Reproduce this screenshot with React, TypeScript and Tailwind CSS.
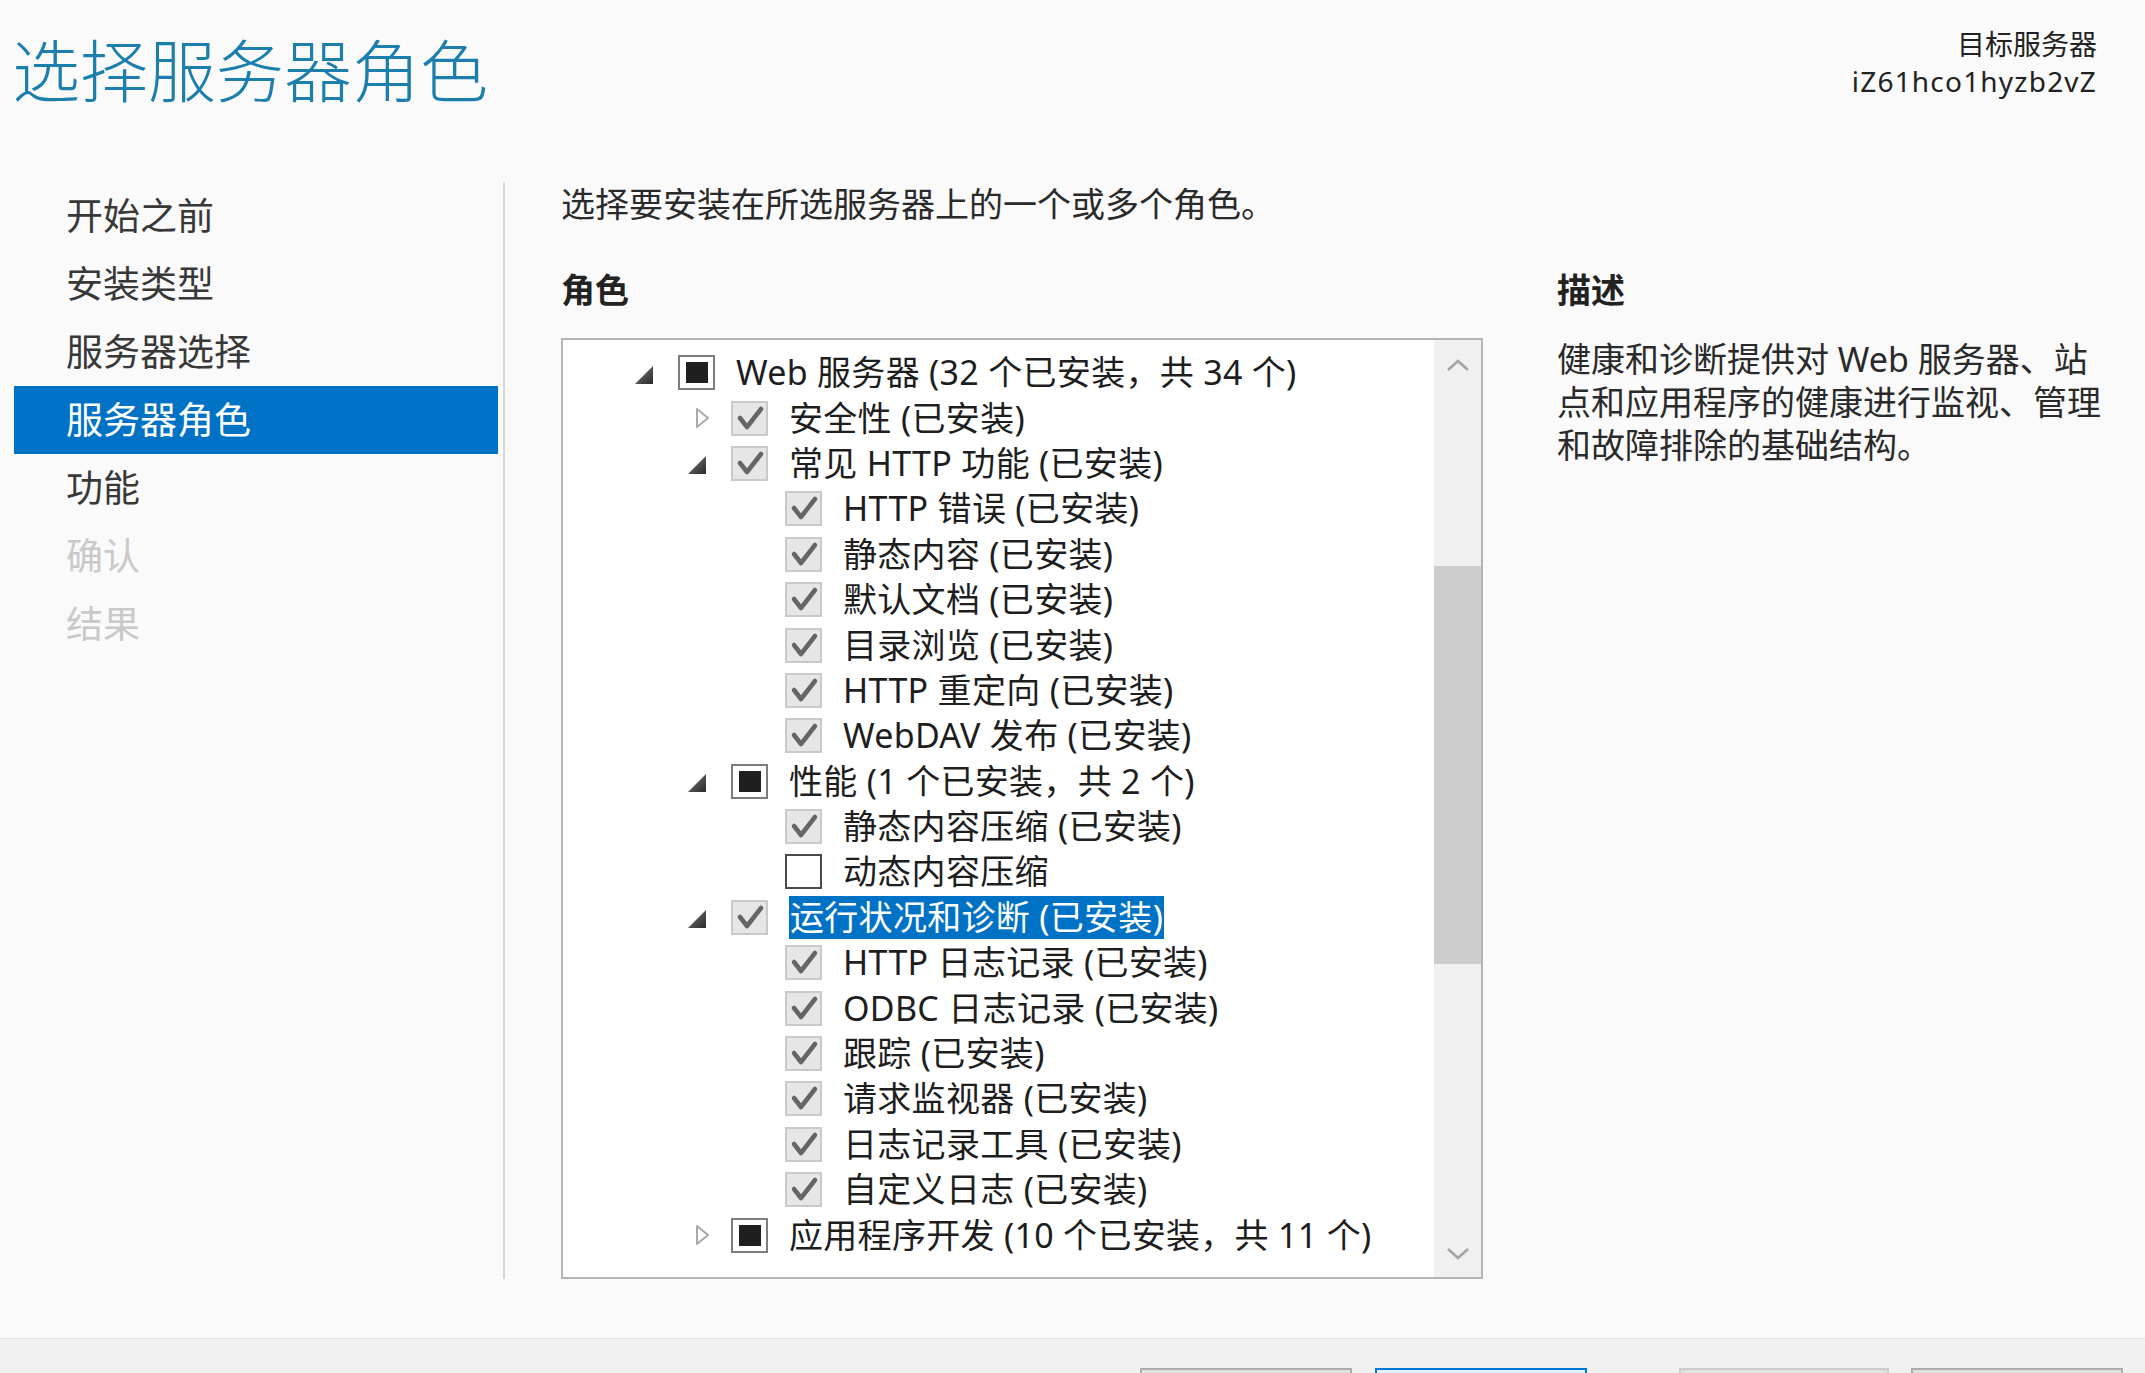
import React from "react";

type Check = "checked" | "mixed" | "empty";
type Exp = "open" | "closed" | "none";

interface Row {
  level: number;
  exp: Exp;
  check: Check;
  label: string;
  selected?: boolean;
}

const navItems: { label: string; state: "normal" | "active" | "disabled" }[] = [
  { label: "开始之前", state: "normal" },
  { label: "安装类型", state: "normal" },
  { label: "服务器选择", state: "normal" },
  { label: "服务器角色", state: "active" },
  { label: "功能", state: "normal" },
  { label: "确认", state: "disabled" },
  { label: "结果", state: "disabled" },
];

const rows: Row[] = [
  { level: 0, exp: "open", check: "mixed", label: "Web 服务器 (32 个已安装，共 34 个)" },
  { level: 1, exp: "closed", check: "checked", label: "安全性 (已安装)" },
  { level: 1, exp: "open", check: "checked", label: "常见 HTTP 功能 (已安装)" },
  { level: 2, exp: "none", check: "checked", label: "HTTP 错误 (已安装)" },
  { level: 2, exp: "none", check: "checked", label: "静态内容 (已安装)" },
  { level: 2, exp: "none", check: "checked", label: "默认文档 (已安装)" },
  { level: 2, exp: "none", check: "checked", label: "目录浏览 (已安装)" },
  { level: 2, exp: "none", check: "checked", label: "HTTP 重定向 (已安装)" },
  { level: 2, exp: "none", check: "checked", label: "WebDAV 发布 (已安装)" },
  { level: 1, exp: "open", check: "mixed", label: "性能 (1 个已安装，共 2 个)" },
  { level: 2, exp: "none", check: "checked", label: "静态内容压缩 (已安装)" },
  { level: 2, exp: "none", check: "empty", label: "动态内容压缩" },
  { level: 1, exp: "open", check: "checked", label: "运行状况和诊断 (已安装)", selected: true },
  { level: 2, exp: "none", check: "checked", label: "HTTP 日志记录 (已安装)" },
  { level: 2, exp: "none", check: "checked", label: "ODBC 日志记录 (已安装)" },
  { level: 2, exp: "none", check: "checked", label: "跟踪 (已安装)" },
  { level: 2, exp: "none", check: "checked", label: "请求监视器 (已安装)" },
  { level: 2, exp: "none", check: "checked", label: "日志记录工具 (已安装)" },
  { level: 2, exp: "none", check: "checked", label: "自定义日志 (已安装)" },
  { level: 1, exp: "closed", check: "mixed", label: "应用程序开发 (10 个已安装，共 11 个)" },
];

const indent = ["pl-[66px]", "pl-[119px]", "pl-[173px]"];

const Expander: React.FC<{ exp: Exp }> = ({ exp }) => {
  if (exp === "open") {
    return (
      <svg width="18" height="18" viewBox="0 0 18 18" className="ml-[6px] mt-[4px]">
        <defs>
          <linearGradient id="tri" x1="0" y1="0" x2="1" y2="1">
            <stop offset="0" stopColor="#7a7a7a" />
            <stop offset="1" stopColor="#2a2a2a" />
          </linearGradient>
        </defs>
        <polygon points="18,0 18,18 0,18" fill="url(#tri)" />
      </svg>
    );
  }
  if (exp === "closed") {
    return (
      <svg width="16" height="22" viewBox="0 0 16 22" className="ml-[13px]">
        <polygon points="2,2 13,11 2,20" fill="#ffffff" stroke="#a9a9a9" strokeWidth="2" strokeLinejoin="round" />
      </svg>
    );
  }
  return null;
};

const Box: React.FC<{ check: Check }> = ({ check }) => {
  if (check === "mixed") {
    return (
      <div className="w-[37px] h-[35px] border-2 border-[#7c7c7c] bg-white flex items-center justify-center shrink-0">
        <div className="w-[22px] h-[21px] bg-[#1f1f1f]" />
      </div>
    );
  }
  if (check === "empty") {
    return <div className="w-[37px] h-[35px] border-2 border-[#4a4a4a] bg-white shrink-0" />;
  }
  return (
    <div className="w-[37px] h-[35px] border-2 border-[#c9c9c9] bg-[#e6e6e6] shrink-0">
      <svg width="33" height="31" viewBox="0 0 33 31">
        <path d="M7 15 L14 24 L28 6" fill="none" stroke="#656565" strokeWidth="4.5" strokeLinecap="round" strokeLinejoin="round" />
      </svg>
    </div>
  );
};

const TreeRow: React.FC<{ row: Row }> = ({ row }) => (
  <div className={`h-[45.4px] flex items-center ${indent[row.level]}`}>
    <div className="w-[30px] h-[30px] flex items-center shrink-0">
      <Expander exp={row.exp} />
    </div>
    <div className="ml-[19px]">
      <Box check={row.check} />
    </div>
    <span
      className={`ml-[21px] whitespace-nowrap text-[34px] leading-[43px] tracking-[0.3px] ${
        row.selected ? "bg-[#0072c6] text-white px-[1px]" : "text-[#1e1e1e]"
      }`}
    >
      {row.label}
    </span>
  </div>
);

export default function App() {
  return (
    <div className="w-[2145px] h-[1373px] overflow-hidden bg-[#fafafa] flex flex-col font-['Noto_Sans','Noto_Sans_CJK_SC',sans-serif]">
      {/* header */}
      <div className="h-[182px] flex justify-between shrink-0">
        <div className="pl-[12px] pt-[32px] text-[68px] leading-[72px] font-light text-[#1b7ead] font-['Noto_Sans_CJK_SC',sans-serif]">
          选择服务器角色
        </div>
        <div className="pr-[48px] pt-[26px] text-right text-[28px] leading-[37px] text-[#222]">
          <div>目标服务器</div>
          <div className="tracking-[1.2px]">iZ61hco1hyzb2vZ</div>
        </div>
      </div>

      {/* body */}
      <div className="flex h-[1156px] shrink-0">
        <div className="w-[498px] pl-[14px] shrink-0">
          {navItems.map((n) => (
            <div
              key={n.label}
              className={`h-[68px] flex items-center pl-[52px] text-[37px] ${
                n.state === "active"
                  ? "bg-[#0072c6] text-white"
                  : n.state === "disabled"
                  ? "text-[#c9c9c9]"
                  : "text-[#383838]"
              }`}
            >
              {n.label}
            </div>
          ))}
        </div>
        <div className="ml-[5px] w-[2px] h-[1097px] bg-[#d5d5d5] shrink-0" />

        <div className="pl-[56px] flex-1 flex flex-col">
          <div className="text-[34px] leading-[44px] text-[#2a2a2a] whitespace-nowrap">
            选择要安装在所选服务器上的一个或多个角色。
          </div>
          <div className="flex mt-[42px]">
            <div className="w-[922px] shrink-0">
              <div className="text-[34px] leading-[44px] font-bold text-[#222]">角色</div>
              <div className="mt-[26px] w-[922px] h-[941px] border-2 border-[#b4b4b4] bg-white flex">
                <div className="flex-1 pt-[10px] overflow-hidden">
                  {rows.map((r, i) => (
                    <TreeRow key={i} row={r} />
                  ))}
                </div>
                <div className="w-[47px] bg-[#f0f0f0] flex flex-col items-center shrink-0">
                  <div className="h-[226px] w-full flex justify-center pt-[18px]">
                    <svg width="24" height="14" viewBox="0 0 24 14">
                      <path d="M2 12 L12 3 L22 12" fill="none" stroke="#a3a3a3" strokeWidth="2.5" />
                    </svg>
                  </div>
                  <div className="h-[398px] w-full bg-[#cdcdcd]" />
                  <div className="flex-1 w-full flex items-end justify-center pb-[16px]">
                    <svg width="24" height="14" viewBox="0 0 24 14">
                      <path d="M2 2 L12 11 L22 2" fill="none" stroke="#a3a3a3" strokeWidth="2.5" />
                    </svg>
                  </div>
                </div>
              </div>
            </div>
            <div className="ml-[74px]">
              <div className="text-[34px] leading-[44px] font-bold text-[#222]">描述</div>
              <div className="mt-[26px] text-[34px] leading-[43px] text-[#2a2a2a] whitespace-nowrap">
                <div>健康和诊断提供对 Web 服务器、站</div>
                <div>点和应用程序的健康进行监视、管理</div>
                <div>和故障排除的基础结构。</div>
              </div>
            </div>
          </div>
        </div>
      </div>

      {/* footer */}
      <div className="flex-1 bg-[#f0f0f0] border-t border-[#e2e2e2] flex items-start pt-[29px] pl-[1140px]">
        <div className="w-[212px] h-[40px] border-2 border-[#adadad] bg-[#e1e1e1]" />
        <div className="ml-[23px] w-[212px] h-[40px] border-2 border-[#0078d7] bg-[#e5f1fb]" />
        <div className="ml-[92px] w-[210px] h-[40px] border-2 border-[#cccccc] bg-[#e1e1e1]" />
        <div className="ml-[22px] w-[212px] h-[40px] border-2 border-[#adadad] bg-[#e1e1e1]" />
      </div>
    </div>
  );
}
